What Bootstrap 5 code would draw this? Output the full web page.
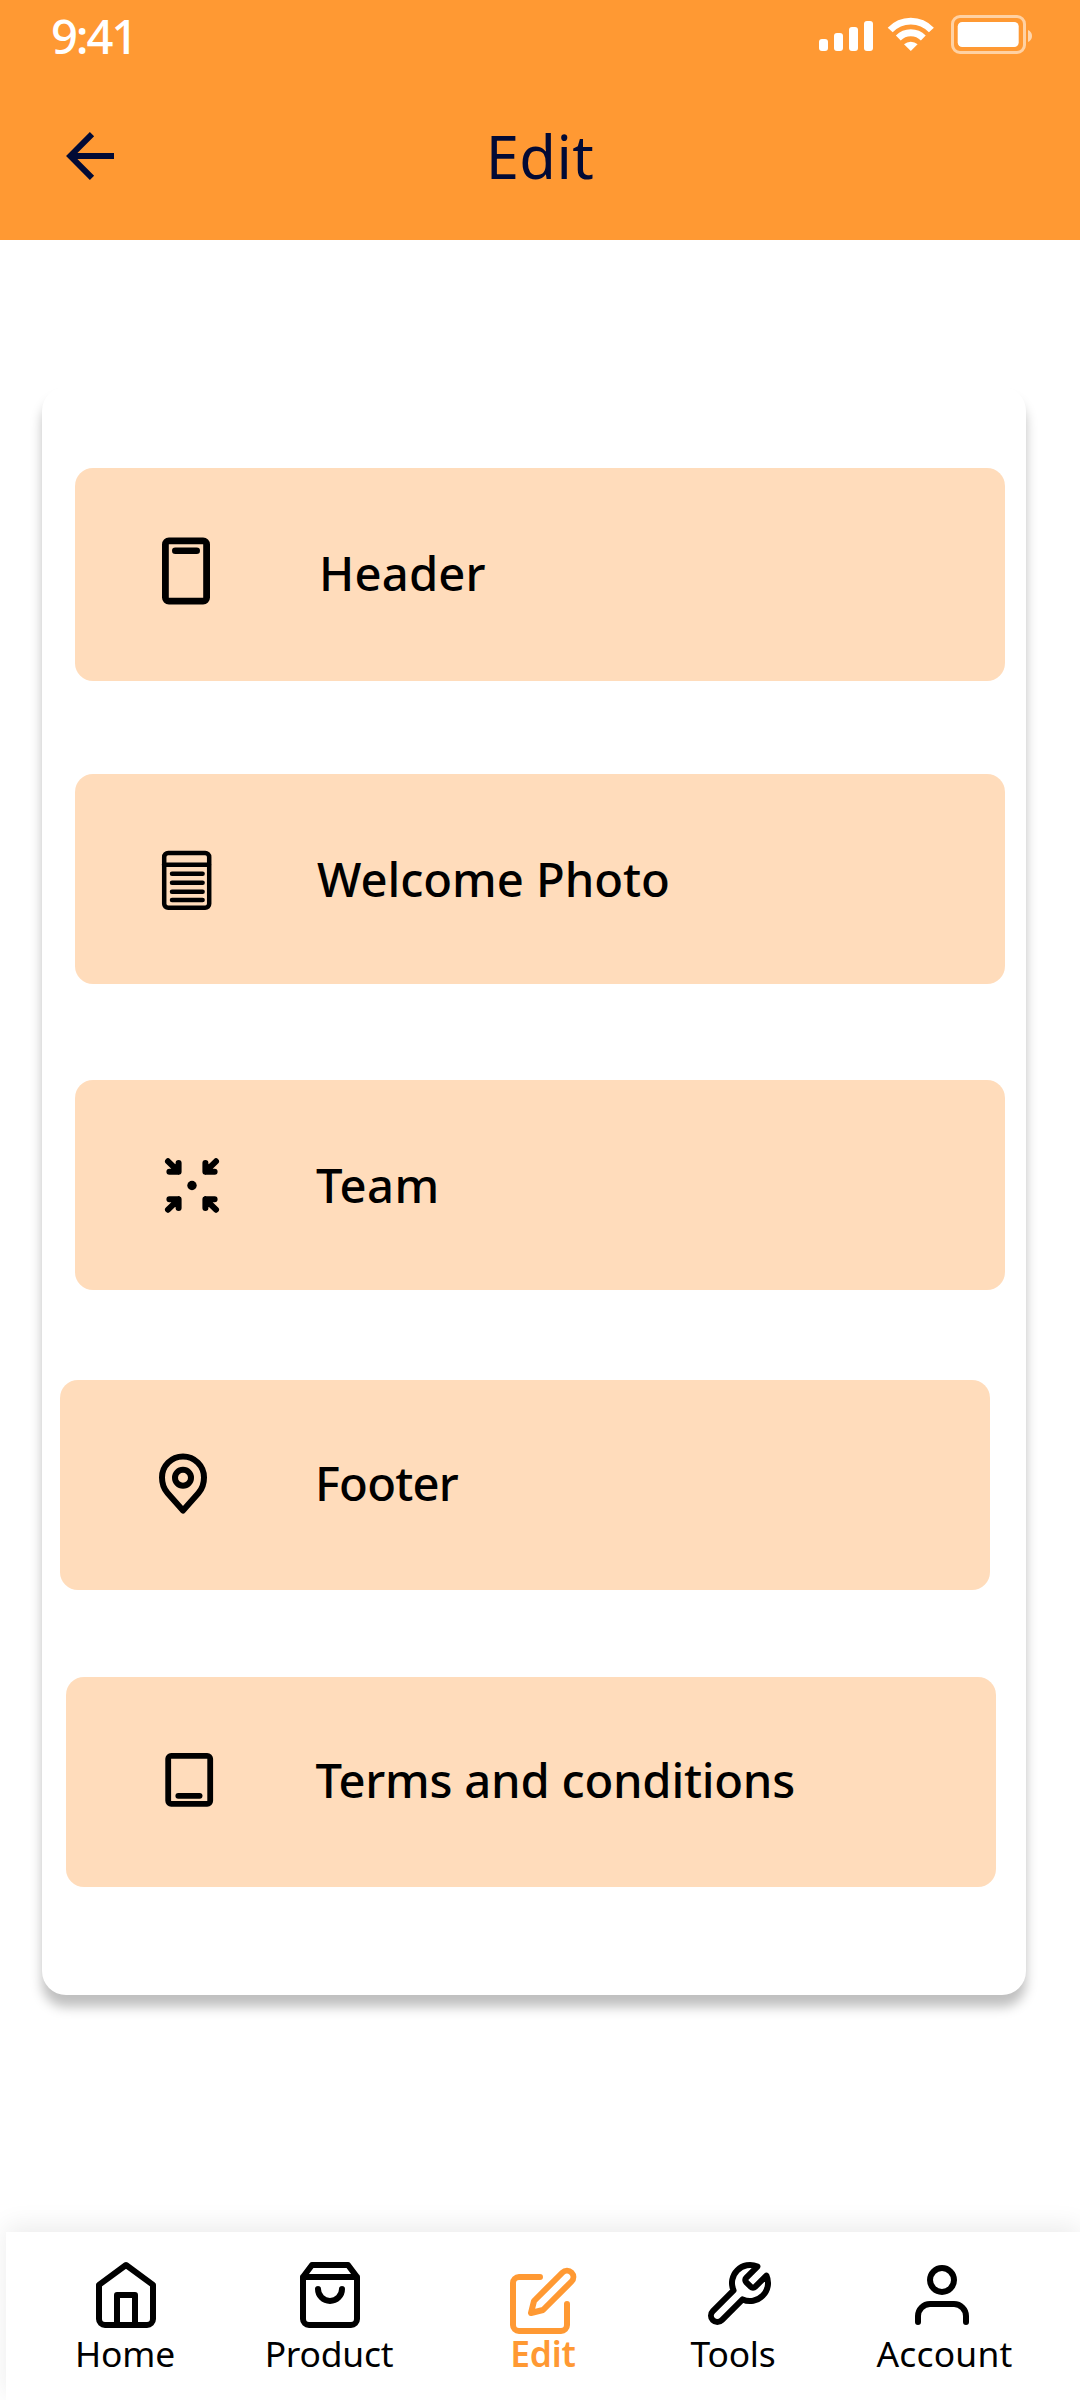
<!DOCTYPE html>
<html lang="en">
<head>
<meta charset="utf-8">
<meta name="viewport" content="width=device-width, initial-scale=1">
<title>Edit</title>
<link rel="stylesheet" href="https://cdn.jsdelivr.net/npm/bootstrap@5.3.0/dist/css/bootstrap.min.css">
<style>
  body { font-family: "Noto Sans", sans-serif; color: #000; background: #fff; }
  .screen { width: 1080px; height: 2400px; overflow: hidden; }
  .topbar { height: 240px; background: #ff9933; color: #020a35; }
  .status-row { height: 72px; padding: 0 45px 0 51px; }
  .clock { font-size: 47.2px; line-height: 73px; font-weight: 500; letter-spacing: -2.2px; }
  .title-row { height: 168px; padding: 0 54px; }
  .title-row svg, .title-spacer { width: 72px; height: 72px; }
  .title-row h1 { font-size: 59.7px; font-weight: 400; line-height: 80px; letter-spacing: .4px; }
  .sections { margin: 147px 54px 0 42px; height: 1608px; padding-top: 81px; border-radius: 24px; box-shadow: 0 12px 12px rgba(0,0,0,.25); }
  .section-item { width: 930px; height: 210px; margin-left: 33px; padding-left: 75px; border-radius: 18px; background: #ffdcbb; color: #000; font-size: 47.2px; font-weight: 500; line-height: 64px; }
  .section-item svg { width: 80px; height: 80px; flex: none; margin-right: 87px; }
  .item-header { height: 213px; margin-bottom: 93px; letter-spacing: .18px; }
  .item-header svg { margin-right: 89px; }
  .item-header span { padding-bottom: 3px; }
  .item-welcome { margin-bottom: 96px; letter-spacing: -.04px; }
  .item-team { margin-bottom: 90px; letter-spacing: .4px; }
  .item-team svg { margin-right: 86px; }
  .item-footer { margin: 0 0 87px 18px; padding-left: 90px; letter-spacing: -.8px; }
  .item-footer svg { margin-right: 85px; }
  .item-terms { margin-left: 24px; padding-left: 84px; letter-spacing: -.23px; }
  .item-terms svg { margin-right: 85.5px; }
  .item-footer span, .item-terms span { padding-bottom: 5px; }
  .line-icon { fill: none; stroke: currentColor; stroke-linecap: round; stroke-linejoin: round; }
  .tabbar { height: 168px; margin-left: 6px; padding: 27px 0 0 18px; box-shadow: 0 -6px 24px rgba(0,0,0,.08); }
  .tabbar a { color: #000; font-size: 35.4px; line-height: 48px; width: 204px; letter-spacing: -.2px; }
  .tabbar a span { padding-right: 2px; }
  .tabbar svg { width: 72px; height: 72px; stroke-width: 2; margin-bottom: -2px; }
  .tabbar a.active { width: 222px; color: #ff9933; font-weight: 600; }
  .tabbar a.active span { padding: 0; }
  .tabbar a.active svg { margin: 6px 0 -8px; }
  .tabbar a.tab-tools { width: 162px; }
  .tab-tools svg { margin-left: 6px; }
  .tabbar a.tab-tools span { padding-right: 4px; }
  .tabbar a.tab-account { width: 252px; letter-spacing: .2px; }
  .tabbar a.tab-account span { padding: 0 0 0 5px; }
</style>
</head>
<body>
<div class="screen d-flex flex-column">
  <header class="topbar flex-shrink-0">
    <div class="status-row d-flex justify-content-between align-items-start text-white">
      <span class="clock">9:41</span>
      <svg width="216" height="60" viewBox="0 0 216 60" fill="#fff" aria-hidden="true">
        <rect x="0" y="39" width="9" height="12" rx="3"/><rect x="15" y="33" width="9" height="18" rx="3"/>
        <rect x="30" y="27" width="9" height="24" rx="3"/><rect x="45" y="21" width="9" height="30" rx="3"/>
        <g fill="none" stroke="#fff" stroke-width="6.8">
          <path d="M71.2 30A28.2 28.2 0 0 1 112.4 30"/><path d="M79.3 38A17.5 17.5 0 0 1 104.3 38"/>
        </g>
        <path d="M91.8 51L85 44.3A10 10 0 0 1 98.6 44.3Z"/>
        <rect x="133.5" y="16.5" width="72" height="36" rx="7.5" fill="none" stroke="#fff" stroke-width="3" opacity=".55"/>
        <rect x="138.7" y="22" width="61" height="25" rx="4.5"/>
        <path d="M209 30c2.6 1 4 3.4 4 6s-1.4 5-4 6z" opacity=".6"/>
      </svg>
    </div>
    <div class="title-row d-flex justify-content-between align-items-center">
      <svg viewBox="0 0 72 72" fill="none" stroke="#020a35" stroke-width="6" aria-label="Back"><path d="M60 36H17M38 14.2L16.3 36L38 57.8"/></svg>
      <h1 class="m-0">Edit</h1>
      <span class="title-spacer"></span>
    </div>
  </header>

  <main class="flex-grow-1">
    <div class="sections bg-white">
      <a class="section-item item-header d-flex align-items-center text-decoration-none" href="#">
        <svg class="line-icon" viewBox="0 0 80 80"><rect x="15.4" y="5.9" width="41.2" height="60.2" rx="3.5" stroke-width="6.8"/><path stroke-width="6.6" d="M25.3 15.8H46.7"/></svg>
        <span>Header</span>
      </a>
      <a class="section-item item-welcome d-flex align-items-center text-decoration-none" href="#">
        <svg class="line-icon" viewBox="0 0 80 80" stroke-width="4.5"><rect x="14.2" y="14" width="45" height="54.8" rx="4"/><path d="M14 25.8H59M22 34.8H52.6M22 43.8H52.6M22 52.7H52.6M22 61H52.6"/></svg>
        <span>Welcome Photo</span>
      </a>
      <a class="section-item item-team d-flex align-items-center text-decoration-none" href="#">
        <svg class="line-icon" viewBox="0 0 80 80" stroke-width="6"><path d="M18 16.3L28.6 26.7V18M28.6 26.7H19.4M66 16.3L55.4 26.7V18M55.4 26.7H64.6M18 64.7L28.6 54.3V63M28.6 54.3H19.4M66 64.7L55.4 54.3V63M55.4 54.3H64.6"/><circle cx="42" cy="40.5" r="4.7" fill="currentColor" stroke="none"/></svg>
        <span>Team</span>
      </a>
      <a class="section-item item-footer d-flex align-items-center text-decoration-none" href="#">
        <svg class="line-icon" viewBox="0 0 80 80" stroke-width="6"><path d="M33 65.5L17.5 48C14 44 12 39 12 32.5A21 21 0 0 1 54 32.5C54 39 52 44 48.5 48Z"/><circle cx="33" cy="32.8" r="8"/></svg>
        <span>Footer</span>
      </a>
      <a class="section-item item-terms d-flex align-items-center text-decoration-none" href="#">
        <svg class="line-icon" viewBox="0 0 80 80" stroke-width="5.8"><rect x="18.2" y="13.8" width="42" height="48" rx="3"/><path d="M28.3 53.8H49.6"/></svg>
        <span>Terms and conditions</span>
      </a>
    </div>
  </main>

  <nav class="tabbar bg-white d-flex flex-shrink-0">
    <a class="d-flex flex-column align-items-center text-decoration-none" href="#">
      <svg class="line-icon" viewBox="0 0 24 24"><path d="M12 2L3 8.6V20a2 2 0 0 0 2 2H19a2 2 0 0 0 2-2V8.6Z"/><path d="M9 22V12h6v10"/></svg>
      <span>Home</span>
    </a>
    <a class="d-flex flex-column align-items-center text-decoration-none" href="#">
      <svg class="line-icon" viewBox="0 0 24 24"><path d="M6 2L3 6v14a2 2 0 0 0 2 2h14a2 2 0 0 0 2-2V6l-3-4zM3 6h18M16 10a4 4 0 0 1-8 0"/></svg>
      <span>Product</span>
    </a>
    <a class="active d-flex flex-column align-items-center text-decoration-none" href="#">
      <svg class="line-icon" viewBox="0 0 24 24"><path d="M11 4H4a2 2 0 0 0-2 2v14a2 2 0 0 0 2 2h14a2 2 0 0 0 2-2v-7"/><path d="M18.5 2.5a2.121 2.121 0 0 1 3 3L12 15l-4 1 1-4 9.5-9.5z"/></svg>
      <span>Edit</span>
    </a>
    <a class="tab-tools d-flex flex-column align-items-center text-decoration-none" href="#">
      <svg class="line-icon" viewBox="0 0 24 24"><path d="M14.7 6.3a1 1 0 0 0 0 1.4l1.6 1.6a1 1 0 0 0 1.4 0l3.77-3.77a6 6 0 0 1-7.94 7.94l-6.91 6.91a2.12 2.12 0 0 1-3-3l6.91-6.91a6 6 0 0 1 7.94-7.94l-3.76 3.76z"/></svg>
      <span>Tools</span>
    </a>
    <a class="tab-account d-flex flex-column align-items-center text-decoration-none" href="#">
      <svg class="line-icon" viewBox="0 0 24 24"><path d="M20 21v-2a4 4 0 0 0-4-4H8a4 4 0 0 0-4 4v2"/><circle cx="12" cy="7" r="4"/></svg>
      <span>Account</span>
    </a>
  </nav>
</div>
<script src="https://cdn.jsdelivr.net/npm/bootstrap@5.3.0/dist/js/bootstrap.bundle.min.js"></script>
</body>
</html>
